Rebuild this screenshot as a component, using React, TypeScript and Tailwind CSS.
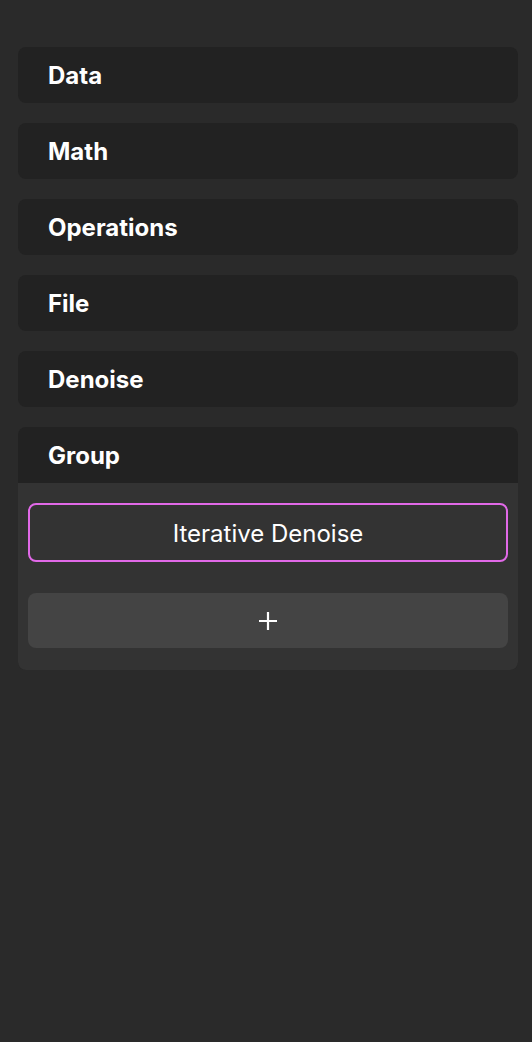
import { useState } from "react";

const categories = ["Data", "Math", "Operations", "File", "Denoise", "Group"];

export default function App() {
    const [open, setOpen] = useState("Group");

    return (
        <main className="min-h-[1042px] w-full bg-[#2a2a2a] pt-[47px] px-[18px] font-['Inter',sans-serif]">
            <div className="flex w-[500px] flex-col gap-[20px]">
                {categories.map((name) => (
                    <section key={name} className="overflow-hidden rounded-lg bg-[#222222]">
                        <button
                            onClick={() => setOpen(open === name ? "" : name)}
                            className="flex h-[56px] w-full items-center pl-[30px] pt-[2px] text-[24px] font-bold text-white"
                        >
                            {name}
                        </button>
                        {open === name && (
                            <div className="flex flex-col gap-[31px] bg-[#333333] px-[10px] pt-[20px] pb-[22px]">
                                <button className="flex h-[59px] items-center justify-center rounded-lg border-2 border-[#e169e8] bg-[#333333] pt-[2px] text-[24px] text-white">
                                    Iterative Denoise
                                </button>
                                <button className="flex h-[55px] items-center justify-center rounded-lg bg-[#444444] text-white">
                                    <svg width="20" height="20" viewBox="0 0 20 20" fill="none" stroke="white" strokeWidth="2.2">
                                        <path d="M10 1v18M1 10h18" />
                                    </svg>
                                </button>
                            </div>
                        )}
                    </section>
                ))}
            </div>
        </main>
    );
}
